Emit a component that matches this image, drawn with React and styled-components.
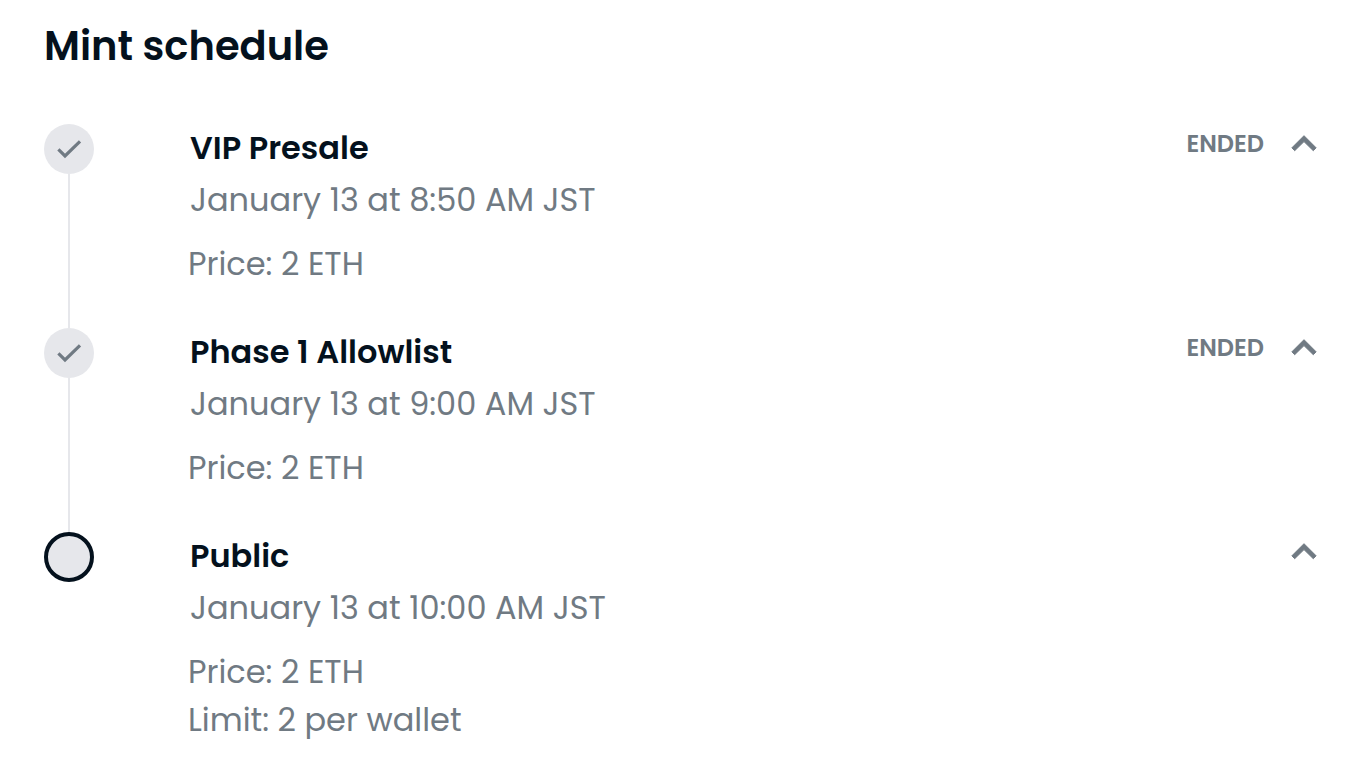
import React, { useState } from 'react';
import styled, { createGlobalStyle } from 'styled-components';

const GlobalStyle = createGlobalStyle`
    body {
        margin: 0;
        background-color: #fff;
        font-family: Poppins, Inter, sans-serif;
        color: #04111d;
    }
`;

const Container = styled.main`
    padding: 16px 55px 36px 44px;
`;

const Title = styled.h1`
    margin: 0 0 48px;
    font-size: 40px;
    line-height: 60px;
    font-weight: 600;
`;

const StageList = styled.ol`
    margin: 0;
    padding: 0;
    list-style: none;
`;

const Stage = styled.li`
    display: flex;
    gap: 94px;
`;

const Timeline = styled.div`
    display: flex;
    flex-direction: column;
    align-items: center;
    flex-shrink: 0;
`;

const Marker = styled.span`
    display: flex;
    align-items: center;
    justify-content: center;
    width: 50px;
    height: 50px;
    box-sizing: border-box;
    border-radius: 50%;
    border: ${props => (props.$active ? '4px solid #04111d' : 'none')};
    background-color: #e6e7eb;
    color: #707a83;
`;

const Connector = styled.span`
    width: 2px;
    flex-grow: 1;
    background-color: #e6e7eb;
`;

const Content = styled.div`
    flex-grow: 1;
    padding-bottom: ${props => (props.$last ? '0' : '40px')};
`;

const StageHeader = styled.div`
    display: flex;
    justify-content: space-between;
    padding-left: 2px;
`;

const StageName = styled.h2`
    margin: 0 0 4px;
    font-size: 32px;
    line-height: 48px;
    font-weight: 600;
`;

const Text = styled.p`
    margin: 0;
    font-size: 32px;
    line-height: 48px;
    color: #707a83;
`;

const Details = styled.div`
    margin-top: 16px;
`;

const Status = styled.div`
    display: flex;
    align-items: center;
    gap: 27px;
    height: 40px;
`;

const StatusLabel = styled.span`
    font-size: 24px;
    line-height: 36px;
    font-weight: 600;
    color: #707a83;
`;

const ToggleButton = styled.button`
    display: flex;
    padding: 0;
    border: none;
    background: none;
    color: #707a83;
    cursor: pointer;
`;

const stages = [
    { id: 1, name: 'VIP Presale', date: 'January 13 at 8:50 AM JST', details: ['Price: 2 ETH'], ended: true },
    { id: 2, name: 'Phase 1 Allowlist', date: 'January 13 at 9:00 AM JST', details: ['Price: 2 ETH'], ended: true },
    { id: 3, name: 'Public', date: 'January 13 at 10:00 AM JST', details: ['Price: 2 ETH', 'Limit: 2 per wallet'], ended: false },
];

const CheckIcon = () => (
    <svg width="26" height="20" viewBox="0 0 26 20" fill="none" aria-hidden="true">
        <path d="M2.4 10.4L9 16.9L24 2.3" stroke="currentColor" strokeWidth="3.2" />
    </svg>
);

const ChevronIcon = ({ open }) => (
    <svg
        width="26"
        height="18"
        viewBox="0 0 26 18"
        fill="currentColor"
        stroke="currentColor"
        strokeLinejoin="round"
        aria-hidden="true"
    >
        <path
            d={
                open
                    ? 'M13 0.7L0.9 12.8L3.7 15.7L13 6.6L22.3 15.7L25.1 12.8Z'
                    : 'M13 17.3L0.9 5.2L3.7 2.3L13 11.4L22.3 2.3L25.1 5.2Z'
            }
        />
    </svg>
);

const MintStage = ({ stage, last }) => {
    const [open, setOpen] = useState(true);

    return (
        <Stage>
            <Timeline>
                <Marker $active={!stage.ended}>{stage.ended && <CheckIcon />}</Marker>
                {!last && <Connector />}
            </Timeline>
            <Content $last={last}>
                <StageHeader>
                    <div>
                        <StageName>{stage.name}</StageName>
                        <Text>{stage.date}</Text>
                    </div>
                    <Status>
                        {stage.ended && <StatusLabel>ENDED</StatusLabel>}
                        <ToggleButton
                            type="button"
                            aria-expanded={open}
                            aria-label={`${stage.name} details`}
                            onClick={() => setOpen(!open)}
                        >
                            <ChevronIcon open={open} />
                        </ToggleButton>
                    </Status>
                </StageHeader>
                {open && (
                    <Details>
                        {stage.details.map(detail => (
                            <Text key={detail}>{detail}</Text>
                        ))}
                    </Details>
                )}
            </Content>
        </Stage>
    );
};

const App = () => (
    <>
        <GlobalStyle />
        <Container>
            <Title>Mint schedule</Title>
            <StageList>
                {stages.map((stage, index) => (
                    <MintStage key={stage.id} stage={stage} last={index === stages.length - 1} />
                ))}
            </StageList>
        </Container>
    </>
);

export default App;
